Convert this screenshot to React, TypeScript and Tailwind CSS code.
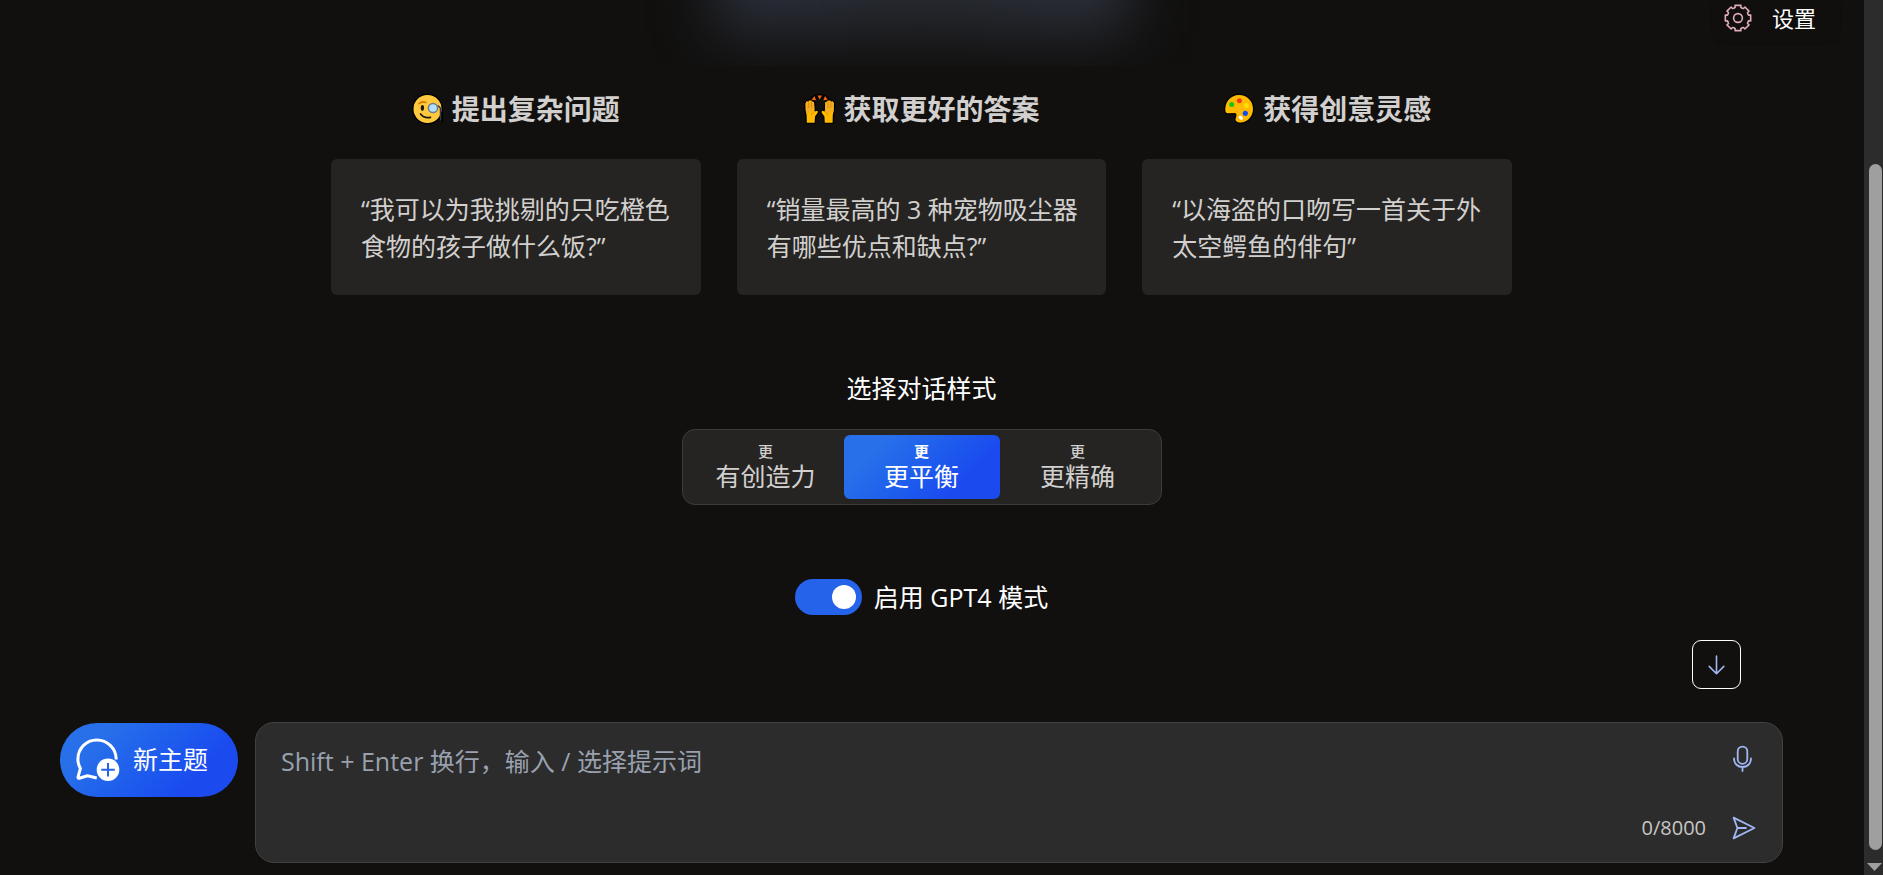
// App.tsx — chat welcome screen: examples, tone selector, composer
import React, { useState } from "react";

type Example = {
  title: string;
  text: string;
  icon: React.ReactNode;
};

function MonocleFace() {
  return (
    <svg viewBox="0 0 32 32" className="h-8 w-8" aria-hidden="true">
      <circle cx="15.5" cy="16" r="15.4" fill="#000" />
      <path d="M29 15 L29.6 27" stroke="#000" strokeWidth="3.4" strokeLinecap="round" />
      <circle cx="15.5" cy="16" r="14" fill="#ffc83d" />
      <path d="M6.8 10.8 Q10 7.6 14 9.6" fill="none" stroke="#d67d00" strokeWidth="1.6" strokeLinecap="round" />
      <ellipse cx="10.4" cy="15" rx="1.7" ry="2.9" fill="#1c1a12" />
      <path d="M8.6 21 Q12 25.6 18.4 24.4" fill="none" stroke="#1c1a12" strokeWidth="1.8" strokeLinecap="round" />
      <path d="M26.4 13 L28.4 15 L28.6 27" fill="none" stroke="#2e3b46" strokeWidth="1.4" strokeLinecap="round" />
      <circle cx="21" cy="15" r="4.6" fill="#b4e0fa" stroke="#697d94" strokeWidth="1.5" />
    </svg>
  );
}

function Hand() {
  const shape =
    "M1.6 10.4 L2.4 8.6 L4.6 8.8 L5 7.6 L7.6 7.6 L8.2 8.6 L10 9 L10.6 18.4 L13.2 17.8 Q14.8 18.8 13.2 20.6 L11 23.4 L10.6 29.8 H2.8 L2.6 22 L1.6 17 Z";
  return (
    <g>
      <path d={shape} fill="#000" stroke="#000" strokeWidth="2.6" strokeLinejoin="round" />
      <path d={shape} fill="#ffb900" />
      <path d="M1.6 10.4 L2.4 8.6 L10 9 L10.4 17 L6 20 L2 19 Z" fill="#f0ad22" />
      <path d="M4.6 9.5 V15 M7.4 8.6 V15 M10.6 18.4 Q7.8 19.6 7.4 22.4" fill="none" stroke="#d67d00" strokeWidth="0.7" />
    </g>
  );
}

function RaisedHands() {
  return (
    <svg viewBox="0 0 32 32" className="h-8 w-8" aria-hidden="true">
      <path d="M8.6 5.6 Q15.7 1.4 22.8 5.6" fill="none" stroke="#000" strokeWidth="5" strokeLinecap="round" />
      <Hand />
      <g transform="translate(31.4 0) scale(-1 1)">
        <Hand />
      </g>
      <path d="M13.4 2.6 H18 L15.7 6.6 Z M10.4 3 L12.2 7.2 L7.6 6.8 Z M21 3 L19.2 7.2 L23.8 6.8 Z" fill="#f7630c" />
    </svg>
  );
}

function Palette() {
  const body =
    "M2.4 18.6 C1.2 10 7 2 16 2 C24 2 30 8 30 15.8 C30 23 25 29.5 17.5 29.5 C13.8 29.5 11.6 27.8 12.8 25 C13.8 22.5 14 20.2 11.5 20 L4.6 20.2 Q2.8 20.2 2.4 18.6 Z";
  return (
    <svg viewBox="0 0 32 32" className="h-8 w-8" aria-hidden="true">
      <path d={body} fill="#ffb900" stroke="#000" strokeWidth="2.4" strokeLinejoin="round" />
      <path d={body} fill="#ffb900" />
      <circle cx="8.7" cy="11.6" r="2.5" fill="#16c60c" />
      <circle cx="16.4" cy="7.8" r="2.5" fill="#f03a17" />
      <circle cx="23.3" cy="12.5" r="2.5" fill="#ffe100" />
      <circle cx="22.3" cy="20.3" r="2.6" fill="#0f4ef5" />
      <ellipse cx="17.8" cy="24.7" rx="2.4" ry="1.7" transform="rotate(40 17.8 24.7)" fill="#fff" />
    </svg>
  );
}

// eight flat teeth joined by small round notches
function GearIcon() {
  const at = (r: number, deg: number) => {
    const a = (deg * Math.PI) / 180;
    return `${(14 + r * Math.cos(a)).toFixed(2)} ${(14 + r * Math.sin(a)).toFixed(2)}`;
  };
  const d = Array.from({ length: 8 })
    .map((_, i) => {
      const c = i * 45 - 90;
      return `${i === 0 ? "M" : "L"}${at(13, c - 13)} L${at(13, c + 13)} L${at(11, c + 15)} Q${at(10.4, c + 22.5)} ${at(11, c + 30)}`;
    })
    .join(" ");
  return (
    <svg viewBox="0 0 28 28" className="h-7 w-7" fill="none" stroke="#e0aabd" strokeWidth="1.6" strokeLinejoin="round" aria-hidden="true">
      <path d={`${d} Z`} />
      <circle cx="14" cy="14" r="4.4" />
    </svg>
  );
}

function NewTopicIcon() {
  return (
    <svg viewBox="0 0 44 44" className="h-11 w-11" fill="none" aria-hidden="true">
      <path
        d="M40.2 21.6 C40.2 10.4 31.6 2 20.8 2 C10 2 1.9 10.6 1.9 21.4 C1.9 25 3 27.8 4.4 30.4 L2 39.2 Q2 40.4 3.2 40.2 L11.5 37.8 L20.8 40"
        stroke="#fff"
        strokeWidth="3"
        strokeLinejoin="round"
      />
      <circle cx="32" cy="31.8" r="11.3" fill="#fff" />
      <path d="M25.2 31.8 H38.8 M32 25 V38.6" stroke="#2563eb" strokeWidth="2" />
    </svg>
  );
}

const examples: Example[] = [
  { title: "提出复杂问题", text: "“我可以为我挑剔的只吃橙色食物的孩子做什么饭?”", icon: <MonocleFace /> },
  { title: "获取更好的答案", text: "“销量最高的 3 种宠物吸尘器有哪些优点和缺点?”", icon: <RaisedHands /> },
  { title: "获得创意灵感", text: "“以海盗的口吻写一首关于外太空鳄鱼的俳句”", icon: <Palette /> },
];

const tones = ["有创造力", "更平衡", "更精确"];

function ExampleColumn({ e }: { e: Example }) {
  return (
    <section className="flex-1">
      <h2 className="flex items-center justify-center gap-2 text-[28px] leading-9 font-bold text-[#d2d0ce]">
        {e.icon}
        {e.title}
      </h2>
      <button className="mt-8 block w-full rounded-md bg-[#252422] pt-8 pr-5 pb-[30px] pl-[30px] text-left text-[25px] leading-[37px] text-[#d2d0ce]">
        {e.text}
      </button>
    </section>
  );
}

export default function App() {
  const [tone, setTone] = useState(1);
  const [gpt4, setGpt4] = useState(true);
  const [text, setText] = useState("");

  return (
    <div className="flex min-h-screen bg-[#11100f] font-['Open_Sans','Noto_Sans_CJK_SC',sans-serif] text-white">
      <main className="relative flex flex-1 flex-col pr-[21px]">
        {/* Glow under the banner */}
        <div className="flex h-[66px] justify-center overflow-hidden">
          <div className="-mt-[90px] h-[122px] w-[410px] bg-linear-to-r from-[#2c313d] via-[#282a31] to-[#2e323e] blur-[30px]" />
        </div>

        <button className="absolute top-0 right-6 flex h-[42px] items-center gap-5 rounded-b-xl bg-[#100f0e] pr-6 pb-1.5 pl-3 text-[22px] shadow-sm">
          <GearIcon />
          设置
        </button>

        <div className="mx-auto mt-[25px] flex w-full max-w-[1181px] gap-9">
          {examples.map((e) => (
            <ExampleColumn key={e.title} e={e} />
          ))}
        </div>

        <h3 className="mt-[75px] text-center text-[25px] leading-9">选择对话样式</h3>
        <div className="mx-auto mt-[23px] flex rounded-[13px] border border-[#3d3c3b] bg-[#252422] p-[5px]">
          {tones.map((t, i) => (
            <button
              key={t}
              onClick={() => setTone(i)}
              aria-pressed={i === tone}
              className={`flex h-16 w-39 flex-col items-center justify-center rounded-md ${
                i === tone ? "bg-linear-135 from-[#2870ea] from-20% to-[#1b4aef] to-75% text-white" : "text-[#d2d0ce]"
              }`}
            >
              <span className={`text-[15px] leading-[18px] ${i === tone ? "font-bold" : "font-medium"}`}>更</span>
              <span className="text-[25px] leading-8">{t}</span>
            </button>
          ))}
        </div>

        <label className="mx-auto mt-[74px] flex cursor-pointer items-center gap-3 text-[25px] leading-9">
          <input type="checkbox" checked={gpt4} onChange={(e) => setGpt4(e.target.checked)} className="peer sr-only" />
          <span className="flex h-9 w-[67px] items-center rounded-full bg-[#3d3c3b] px-1.5 peer-checked:justify-end peer-checked:bg-[#2563eb]">
            <span className="h-6 w-6 rounded-full bg-white" />
          </span>
          启用 GPT4 模式
        </label>

        <button
          aria-label="滚动到底部"
          className="mt-[25px] mr-[102px] flex h-[49px] w-[49px] items-center justify-center self-end rounded-[9px] border border-white"
        >
          <svg viewBox="0 0 24 24" className="h-6 w-6" fill="none" stroke="#a2b7f4" strokeWidth="1.6" strokeLinecap="round" strokeLinejoin="round" aria-hidden="true">
            <path d="M11.5 3 V20.8 M4.2 13.4 L11.5 20.8 L18.8 13.4" />
          </svg>
        </button>

        {/* Composer */}
        <div className="mt-[33px] flex items-start gap-[17px] px-[60px] pb-3">
          <button className="mt-px flex h-[74px] w-[178px] items-center gap-[13px] rounded-full bg-linear-135 from-[#2870ea] from-20% to-[#1b4aef] to-75% pl-4 text-[25px]">
            <NewTopicIcon />
            新主题
          </button>
          <div className="flex h-[141px] flex-1 rounded-[19px] border border-[#42413f] bg-[#2c2c2c]">
            <textarea
              aria-label="消息"
              value={text}
              maxLength={8000}
              onChange={(e) => setText(e.target.value)}
              placeholder="Shift + Enter 换行，输入 / 选择提示词"
              className="flex-1 resize-none bg-transparent pt-5 pl-[25px] text-[25px] leading-9 outline-none placeholder:text-gray-400"
            />
            <div className="flex flex-col items-end justify-between pt-5 pr-6 pb-[18px]">
              <button aria-label="语音输入">
                <svg viewBox="0 0 32 32" className="h-8 w-8" fill="none" stroke="#a2b7f4" strokeWidth="1.8" strokeLinecap="round" aria-hidden="true">
                  <rect x="11.7" y="3.6" width="9.6" height="17.2" rx="4.8" />
                  <path d="M8 15.5 C8 20.8 11.8 24 16.5 24 C21.2 24 25 20.8 25 15.5 M16.5 24 V28" />
                </svg>
              </button>
              <div className="flex items-center gap-5">
                <span className="text-xl leading-8 text-[#c8c6c4]">{text.length}/8000</span>
                <button aria-label="发送">
                  <svg viewBox="0 0 32 32" className="h-8 w-8" fill="none" stroke="#a2b7f4" strokeWidth="1.8" strokeLinecap="round" strokeLinejoin="round" aria-hidden="true">
                    <path d="M7.6 5.6 L28.4 16 L7.6 26.4 L11.4 16 Z M11.4 16 H20" />
                  </svg>
                </button>
              </div>
            </div>
          </div>
        </div>
      </main>

      {/* Scroll track */}
      <div className="flex w-[19px] flex-col items-end bg-[#2c2c2c] pr-px" aria-hidden="true">
        <div className="mt-[164px] w-[13px] flex-1 rounded-full bg-[#9f9f9f]" />
        <svg viewBox="0 0 15 8" className="mt-[13px] mb-1 h-2 w-[15px]">
          <path d="M0 0 H15 L7.5 8 Z" fill="#9f9f9f" />
        </svg>
      </div>
    </div>
  );
}
